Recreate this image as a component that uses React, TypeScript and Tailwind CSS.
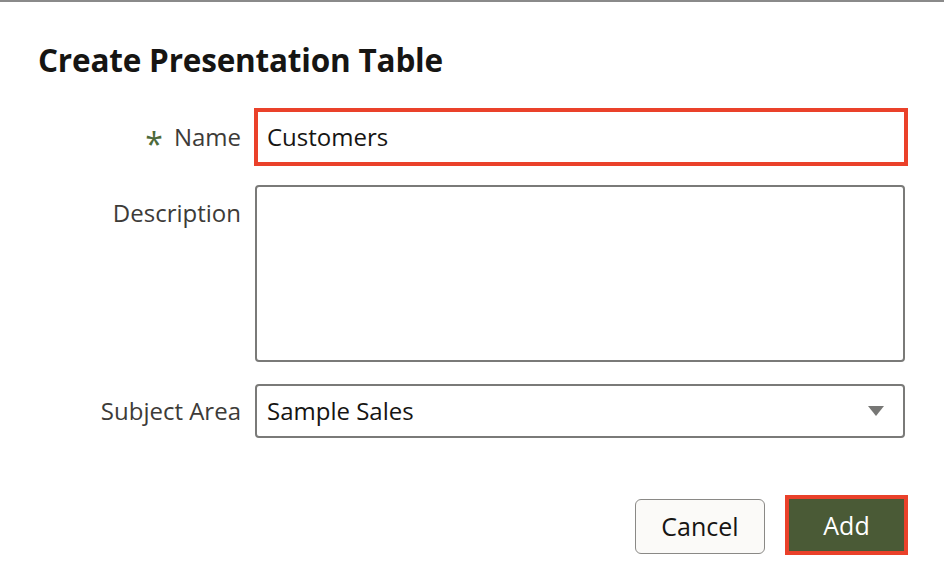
import React from "react";

export default function App() {
  return (
    <div
      className="w-[944px] h-[588px] bg-white border-t-2 border-[#8a8a8a] overflow-hidden"
      style={{ fontFamily: '"Open Sans", "Noto Sans", sans-serif' }}
    >
      <h1 className="pl-[38px] pt-[37px] text-[31.5px] leading-[42px] font-bold text-[#161513] tracking-[-0.2px]">
        Create Presentation Table
      </h1>
      <div className="mt-[27px] grid grid-cols-[241px_650px] gap-x-[14px] text-[24px] text-[#3d3b38]">
        <div className="flex items-center justify-end h-[58px] gap-[11px]">
          <span className="text-[#4d6a3a] text-[32px] leading-[32px] translate-y-[7px]">*</span>
          <span>Name</span>
        </div>
        <div className="-ml-[1px] -mr-[3px] h-[58px] border-[4px] border-[#ea412a] flex items-center pl-[9px] text-[#161513]">
          Customers
        </div>

        <div className="mt-[19px] flex justify-end pt-[12px] leading-[32px]">Description</div>
        <div className="mt-[19px] h-[177px] border-2 border-[#7a7a78] rounded-[4px]" />

        <div className="mt-[22px] flex items-center justify-end h-[54px]">Subject Area</div>
        <div className="mt-[22px] h-[54px] border-2 border-[#7a7a78] rounded-[4px] flex items-center justify-between pl-[10px] pr-[19px] text-[#161513]">
          <span>Sample Sales</span>
          <svg width="16" height="10" viewBox="0 0 16 10">
            <path d="M0 0 H16 L8 10 Z" fill="#777775" />
          </svg>
        </div>
      </div>
      <div className="mt-[57px] flex justify-end gap-[20px] pr-[36px] items-start">
        <button className="mt-[4px] w-[130px] h-[55px] border-[1.5px] border-[#8a8986] rounded-[6px] bg-[#fbfaf8] text-[25px] text-[#161513]">
          Cancel
        </button>
        <button className="w-[123px] h-[60px] border-[4px] border-[#ea412a] bg-[#4a5a36] text-[25px] text-white pt-[2px]">
          Add
        </button>
      </div>
    </div>
  );
}
